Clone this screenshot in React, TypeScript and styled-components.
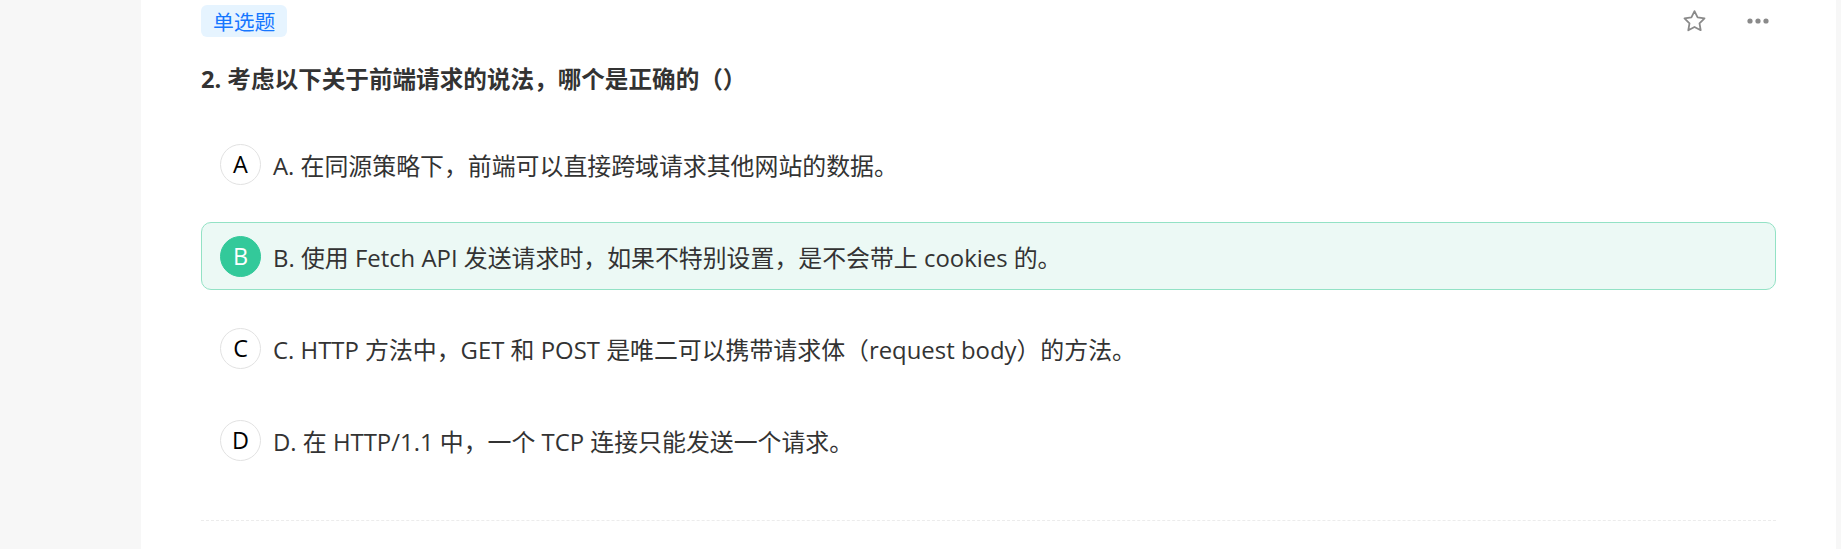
import React from "react";
import styled, { createGlobalStyle } from "styled-components";

const GlobalStyle = createGlobalStyle`
  html, body {
    margin: 0;
    padding: 0;
    background: #f7f7f7;
  }
  body {
    font-family: "Open Sans", "Noto Sans CJK SC", sans-serif;
    color: #333;
  }
`;

const Page = styled.div`
  display: flex;
  height: 549px;
  background: #f7f7f7;
`;

const Sidebar = styled.div`
  width: 141px;
  flex-shrink: 0;
  background: #f7f7f7;
`;

const RightGutter = styled.div`
  width: 5px;
  flex-shrink: 0;
  background: #f7f7f7;
`;

const Panel = styled.main`
  flex: 1;
  background: #fff;
  padding: 5px 60px 0 60px;
  display: flex;
  flex-direction: column;
`;

const Header = styled.div`
  display: flex;
  align-items: center;
  justify-content: space-between;
  height: 32px;
`;

const Tag = styled.span`
  display: inline-flex;
  align-items: center;
  height: 32px;
  padding: 0 12px;
  border-radius: 6px;
  background: #e6f4ff;
  color: #1677ff;
  font-size: 20.8px;
  font-family: "Noto Sans CJK SC", sans-serif;
`;

const Actions = styled.div`
  display: flex;
  align-items: center;
  gap: 38px;
  padding-right: 6px;
`;

const IconButton = styled.button`
  display: inline-flex;
  align-items: center;
  justify-content: center;
  background: none;
  border: none;
  padding: 0;
  cursor: pointer;
  color: #8a8a8a;
`;

const Title = styled.h2`
  margin: 26px 0 0 0;
  font-size: 23.6px;
  line-height: 32px;
  font-weight: 700;
  color: #333;
`;

const Options = styled.div`
  display: flex;
  flex-direction: column;
  gap: 24px;
  margin-top: 35px;
`;

const OptionRow = styled.div<{ $selected?: boolean }>`
  display: flex;
  align-items: center;
  gap: 12px;
  height: 68px;
  box-sizing: border-box;
  padding: 0 18px;
  border-radius: 10px;
  border: 1px solid ${(p) => (p.$selected ? "#93e2c5" : "transparent")};
  background: ${(p) => (p.$selected ? "#ecf9f5" : "transparent")};
  cursor: pointer;
`;

const Letter = styled.span<{ $selected?: boolean }>`
  display: inline-flex;
  align-items: center;
  justify-content: center;
  width: 41px;
  height: 41px;
  box-sizing: border-box;
  border-radius: 50%;
  border: 1px solid ${(p) => (p.$selected ? "#33c99a" : "#e2e2e2")};
  background: ${(p) => (p.$selected ? "#33c99a" : "#fff")};
  color: ${(p) => (p.$selected ? "#fff" : "#000")};
  font-size: 23.4px;
  flex-shrink: 0;
`;

const OptionText = styled.span`
  font-size: 23.9px;
  color: #333;
`;

const Divider = styled.hr`
  margin: 46px 0 0 0;
  border: none;
  border-top: 1px dashed #ececec;
`;

const StarIcon = () => (
  <svg width="27" height="27" viewBox="0 0 24 24" fill="none" stroke="currentColor" strokeWidth="1.6" strokeLinejoin="round">
    <path d="M12 2.8l2.75 5.6 6.15.9-4.45 4.35 1.05 6.1L12 16.85 6.5 19.75l1.05-6.1L3.1 9.3l6.15-.9z" />
  </svg>
);

const MoreIcon = () => (
  <svg width="24" height="8" viewBox="0 0 24 8" fill="currentColor">
    <circle cx="4" cy="4" r="2.6" />
    <circle cx="12" cy="4" r="2.6" />
    <circle cx="20" cy="4" r="2.6" />
  </svg>
);

const options = [
  { key: "A", text: "A. 在同源策略下，前端可以直接跨域请求其他网站的数据。" },
  { key: "B", text: "B. 使用 Fetch API 发送请求时，如果不特别设置，是不会带上 cookies 的。" },
  { key: "C", text: "C. HTTP 方法中，GET 和 POST 是唯二可以携带请求体（request body）的方法。" },
  { key: "D", text: "D. 在 HTTP/1.1 中，一个 TCP 连接只能发送一个请求。" },
];

export default function App() {
  const selected = "B";
  return (
    <>
      <GlobalStyle />
      <Page>
        <Sidebar />
        <Panel>
          <Header>
            <Tag>单选题</Tag>
            <Actions>
              <IconButton aria-label="收藏">
                <StarIcon />
              </IconButton>
              <IconButton aria-label="更多">
                <MoreIcon />
              </IconButton>
            </Actions>
          </Header>
          <Title>2. 考虑以下关于前端请求的说法，哪个是正确的（）</Title>
          <Options>
            {options.map((o) => (
              <OptionRow key={o.key} $selected={o.key === selected}>
                <Letter $selected={o.key === selected}>{o.key}</Letter>
                <OptionText>{o.text}</OptionText>
              </OptionRow>
            ))}
          </Options>
          <Divider />
        </Panel>
        <RightGutter />
      </Page>
    </>
  );
}
